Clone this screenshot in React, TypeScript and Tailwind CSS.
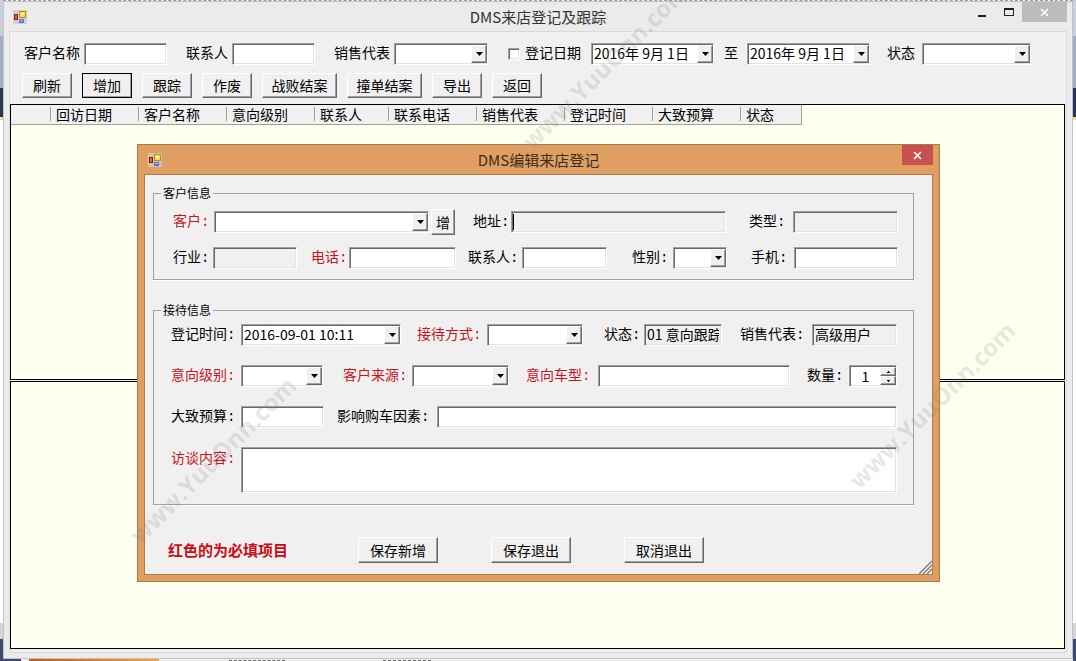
import React, { ReactNode, useState } from "react";
import clsx from "clsx";

const sunken =
  "border border-t-[#a0a0a0] border-l-[#a0a0a0] border-r-white border-b-white shadow-[inset_1px_1px_0_#696969,inset_-1px_-1px_0_#e3e3e3]";
const raised =
  "border border-t-white border-l-white border-r-[#696969] border-b-[#696969] bg-[#f0f0f0] shadow-[inset_-1px_-1px_0_#a0a0a0]";

const columns = [
  { title: "", width: "w-[40px]" },
  { title: "回访日期", width: "w-[88px]" },
  { title: "客户名称", width: "w-[88px]" },
  { title: "意向级别", width: "w-[88px]" },
  { title: "联系人", width: "w-[74px]" },
  { title: "联系电话", width: "w-[88px]" },
  { title: "销售代表", width: "w-[88px]" },
  { title: "登记时间", width: "w-[88px]" },
  { title: "大致预算", width: "w-[88px]" },
  { title: "状态", width: "w-[60px]" },
];

const toolbar = ["刷新", "增加", "跟踪", "作废", "战败结案", "撞单结案", "导出", "返回"];

function FormIcon() {
  return (
    <svg width="14" height="14" viewBox="0 0 14 14" aria-hidden="true">
      <rect width="14" height="14" fill="#cfc8c2" fillOpacity="0.8" />
      <rect x="1.5" y="4.5" width="3" height="5" fill="#d9604a" stroke="#8c1f14" />
      <rect x="6.5" y="1.5" width="6" height="6" fill="#f8d848" stroke="#b8901c" />
      <rect x="8" y="3" width="3" height="2" fill="#fdf2a8" />
      <rect x="6" y="9" width="5" height="4" fill="#4c7ce0" />
      <rect x="7" y="10" width="3" height="1" fill="#9cbcf8" />
    </svg>
  );
}

function CloseIcon() {
  return (
    <svg width="9" height="9" viewBox="0 0 9 9" aria-hidden="true">
      <path d="M1 1l7 7M8 1l-7 7" stroke="#fff" strokeWidth="1.6" fill="none" />
    </svg>
  );
}

function Arrow() {
  return (
    <svg width="7" height="4" viewBox="0 0 7 4" aria-hidden="true">
      <path d="M0 0h7L3.5 4z" fill="#000" />
    </svg>
  );
}

type FieldProps = {
  id: string;
  label: string;
  labelWidth?: string;
  required?: boolean;
  className?: string;
  children: ReactNode;
};

function Field({ id, label, labelWidth, required, className, children }: FieldProps) {
  return (
    <div className={clsx("flex items-center", className)}>
      <label
        htmlFor={id}
        className={clsx("shrink-0 whitespace-nowrap", labelWidth, required && "text-[#c8141e]")}
      >
        {label}
      </label>
      {children}
    </div>
  );
}

type InputProps = {
  id: string;
  width: string;
  value?: string;
  readOnly?: boolean;
};

function TextInput({ id, width, value = "", readOnly }: InputProps) {
  return (
    <input
      id={id}
      type="text"
      defaultValue={value}
      readOnly={readOnly}
      className={clsx(
        "h-[22px] min-w-0 px-[2px] pb-[2px] leading-[18px] outline-none",
        sunken,
        readOnly ? "bg-[#f0f0f0]" : "bg-white",
        width
      )}
    />
  );
}

function Select({ id, width }: { id: string; width: string }) {
  return (
    <div className={clsx("relative h-[22px] min-w-0 bg-white", sunken, width)}>
      <select id={id} className="h-full w-full appearance-none bg-transparent pr-4 pl-1 outline-none">
        <option></option>
      </select>
      <span
        className={clsx(
          "pointer-events-none absolute top-px right-0 bottom-px flex w-4 items-center justify-center",
          raised
        )}
      >
        <Arrow />
      </span>
    </div>
  );
}

function DateInput({ id, width, value }: { id: string; width: string; value: string }) {
  return (
    <div className={clsx("flex h-[22px] min-w-0 bg-white py-px pl-px", sunken, width)}>
      <input
        id={id}
        type="text"
        defaultValue={value}
        className="min-w-0 flex-1 bg-transparent pb-[2px] pl-px leading-4 outline-none"
      />
      <button
        type="button"
        aria-label="选择日期"
        className={clsx("flex w-4 shrink-0 items-center justify-center", raised)}
      >
        <Arrow />
      </button>
    </div>
  );
}

function NumberInput({ id, width }: { id: string; width: string }) {
  const [count, setCount] = useState<number>(1);

  return (
    <div className={clsx("flex h-[22px] bg-white py-px pl-px", sunken, width)}>
      <input
        id={id}
        type="text"
        inputMode="numeric"
        value={count}
        onChange={(e) => setCount(Number(e.target.value) || 0)}
        className="min-w-0 flex-1 bg-transparent text-center leading-[18px] outline-none"
      />
      <div className="flex w-4 shrink-0 flex-col">
        <button
          type="button"
          aria-label="增加数量"
          onClick={() => setCount(count + 1)}
          className={clsx("flex flex-1 items-center justify-center", raised)}
        >
          <svg width="3" height="2" viewBox="0 0 3 2" aria-hidden="true">
            <path d="M1 0h1v1h1v1H0V1h1z" />
          </svg>
        </button>
        <button
          type="button"
          aria-label="减少数量"
          onClick={() => setCount(count - 1)}
          className={clsx("flex flex-1 items-center justify-center", raised)}
        >
          <svg width="3" height="2" viewBox="0 0 3 2" aria-hidden="true">
            <path d="M0 0h3v1H2v1H1V1H0z" />
          </svg>
        </button>
      </div>
    </div>
  );
}

function Group({ title, className, children }: { title: string; className: string; children: ReactNode }) {
  return (
    <fieldset className="min-w-0 border border-[#a0a0a0] shadow-[0_1px_0_#fff]">
      <legend className="ml-[7px] px-[2px] text-xs leading-4">{title}</legend>
      <div className={clsx("flex flex-col", className)}>{children}</div>
    </fieldset>
  );
}

function EditDialog() {
  return (
    <div
      role="dialog"
      aria-label="DMS编辑来店登记"
      className="absolute top-[144px] right-[136px] left-[137px] border border-[#a87c48] bg-[#e09f62] px-[6px] pb-[6px]"
    >
      <div className="grid h-[29px] grid-cols-[1fr_auto_1fr] items-center">
        <span className="pl-1">
          <FormIcon />
        </span>
        <h2 className="text-[15px] text-[#3c2c1c]">DMS编辑来店登记</h2>
        <button
          type="button"
          aria-label="关闭"
          className="flex h-5 w-[31px] items-center justify-center self-start justify-self-end bg-[#c75050]"
        >
          <CloseIcon />
        </button>
      </div>

      <form className="relative flex flex-col border border-[#b07c48] bg-[#f0f0f0] pt-[10px]">
        <div className="flex flex-col gap-[22px] pr-[18px] pl-2">
          <Group title="客户信息" className="gap-3 pt-2 pr-[15px] pb-[10px] pl-[19px]">
            <div className="flex h-[26px] items-center">
              <Field id="customer" label="客户:" labelWidth="w-[41px]" required>
                <Select id="customer" width="w-[215px]" />
              </Field>
              <button type="button" className={clsx("ml-[2px] h-[26px] w-6 shrink-0", raised)}>
                增
              </button>
              <Field id="address" label="地址:" labelWidth="w-[38px]" className="ml-[18px] min-w-0 flex-1">
                <div className="relative flex min-w-0 flex-1">
                  <TextInput id="address" width="flex-1" readOnly />
                  <span className="absolute top-[3px] left-[2px] h-4 w-px bg-black" />
                </div>
              </Field>
              <Field id="kind" label="类型:" labelWidth="w-11" className="ml-[23px]">
                <TextInput id="kind" width="w-[105px]" readOnly />
              </Field>
            </div>
            <div className="flex items-center">
              <Field id="industry" label="行业:" labelWidth="w-10">
                <TextInput id="industry" width="w-[84px]" readOnly />
              </Field>
              <Field id="phone" label="电话:" labelWidth="w-[38px]" required className="ml-[14px] min-w-0 flex-1">
                <TextInput id="phone" width="flex-1" />
              </Field>
              <Field id="contact" label="联系人:" labelWidth="w-[54px]" className="ml-3">
                <TextInput id="contact" width="w-[85px]" />
              </Field>
              <Field id="gender" label="性别:" labelWidth="w-[41px]" className="ml-[25px]">
                <Select id="gender" width="w-[54px]" />
              </Field>
              <Field id="mobile" label="手机:" labelWidth="w-[43px]" className="ml-6">
                <TextInput id="mobile" width="w-[104px]" />
              </Field>
            </div>
          </Group>

          <Group title="接待信息" className="gap-[19px] pt-[6px] pr-4 pb-[11px] pl-[17px]">
            <div className="flex items-center">
              <Field id="time" label="登记时间:" labelWidth="w-[70px]" className="min-w-0 flex-1">
                <DateInput id="time" width="flex-1" value="2016-09-01 10:11" />
              </Field>
              <Field id="way" label="接待方式:" labelWidth="w-[70px]" required className="ml-4">
                <Select id="way" width="w-[96px]" />
              </Field>
              <Field id="state" label="状态:" labelWidth="w-10" className="ml-[21px]">
                <TextInput id="state" width="w-[78px]" value="01 意向跟踪" readOnly />
              </Field>
              <Field id="seller" label="销售代表:" labelWidth="w-[72px]" className="ml-[18px]">
                <TextInput id="seller" width="w-[85px]" value="高级用户" readOnly />
              </Field>
            </div>
            <div className="flex items-center">
              <Field id="level" label="意向级别:" labelWidth="w-[70px]" required>
                <Select id="level" width="w-[82px]" />
              </Field>
              <Field id="source" label="客户来源:" labelWidth="w-[69px]" required className="ml-5">
                <Select id="source" width="w-[97px]" />
              </Field>
              <Field id="model" label="意向车型:" labelWidth="w-[72px]" required className="ml-[17px] min-w-0 flex-1">
                <TextInput id="model" width="flex-1" />
              </Field>
              <Field id="count" label="数量:" labelWidth="w-[42px]" className="ml-[17px]">
                <NumberInput id="count" width="w-[48px]" />
              </Field>
            </div>
            <div className="flex items-center">
              <Field id="budget" label="大致预算:" labelWidth="w-[70px]">
                <TextInput id="budget" width="w-[83px]" />
              </Field>
              <Field id="factor" label="影响购车因素:" labelWidth="w-[100px]" className="ml-[13px] min-w-0 flex-1">
                <TextInput id="factor" width="flex-1" />
              </Field>
            </div>
            <div className="flex items-start">
              <label htmlFor="content" className="w-[70px] shrink-0 leading-6 text-[#c8141e]">
                访谈内容:
              </label>
              <textarea
                id="content"
                className={clsx("h-[46px] min-w-0 flex-1 resize-none bg-white px-[2px] outline-none", sunken)}
              />
            </div>
          </Group>
        </div>

        <div className="flex items-center pt-8 pb-[11px] pl-[23px]">
          <strong className="mr-[70px] text-[15px] text-[#cc0a14]">红色的为必填项目</strong>
          <div className="flex gap-[53px]">
            {["保存新增", "保存退出", "取消退出"].map((text) => (
              <button key={text} type="button" className={clsx("h-[26px] w-20", raised)}>
                {text}
              </button>
            ))}
          </div>
        </div>
        <svg className="absolute right-0 bottom-0" width="13" height="13" viewBox="0 0 13 13" aria-hidden="true">
          <path d="M0 13L13 0M4 13l9-9M8 13l5-5" stroke="#808080" strokeWidth="1.5" />
          <path d="M2 13L13 2M6 13l7-7M10 13l3-3" stroke="#fff" />
        </svg>
      </form>
    </div>
  );
}

function Watermark({ place }: { place: string }) {
  return (
    <span
      className={clsx(
        "pointer-events-none absolute flex h-6 w-[240px] -rotate-45 items-center justify-center font-['Open_Sans','Noto_Sans',sans-serif] text-2xl font-bold whitespace-nowrap text-[#808080]/20",
        place
      )}
    >
      www.YuuOnn.com
    </span>
  );
}

// slivers of the desktop that stay visible beside the window
function Edge() {
  return (
    <div className="flex w-[3px] shrink-0 flex-col">
      <div className="h-9 bg-[#c9cede]" />
      <div className="h-[52px] bg-[#a3aec2]" />
      <div className="h-[29px] bg-[#2c3452]" />
      <div className="h-[3px] bg-[#f3dd8c]" />
      <div className="flex-1 bg-white" />
      <div className="h-4 bg-[#d4d4d4]" />
      <div className="h-[22px] bg-[#3a4a70]" />
    </div>
  );
}

export default function App() {
  return (
    <div className="relative flex min-h-screen overflow-hidden bg-white font-['Noto_Sans_CJK_SC',sans-serif] text-sm leading-5 text-black [&_label]:font-['Liberation_Mono','Noto_Sans_CJK_SC',monospace]">
      <Edge />
      <div className="flex min-w-0 flex-1 flex-col">
        <div className="h-px border-t border-dashed border-[#9a9aa0]" />
        <main className="flex flex-1 flex-col border border-[#c4c4c8] bg-[#ebebeb] px-[5px] pb-[5px]">
          <header className="grid h-[29px] grid-cols-[1fr_auto_1fr] items-center">
            <span className="pl-1">
              <FormIcon />
            </span>
            <h1 className="text-[15px] text-[#333]">DMS来店登记及跟踪</h1>
            <div className="flex items-center justify-end self-start">
              <button type="button" aria-label="最小化" className="flex h-5 w-7 items-center justify-center">
                <span className="mt-2 h-[2px] w-2 bg-[#222]" />
              </button>
              <button type="button" aria-label="最大化" className="flex h-5 w-[26px] items-center justify-center">
                <span className="h-2 w-[10px] border border-t-2 border-[#222]" />
              </button>
              <button
                type="button"
                aria-label="关闭"
                className="flex h-5 w-[45px] items-center justify-center bg-[#bcbcbc]"
              >
                <CloseIcon />
              </button>
            </div>
          </header>

          <div className="flex flex-1 flex-col border border-[#dadada] bg-[#f0f0f0] pt-[11px] pb-[3px]">
            <form className="flex items-center pl-[14px]">
              <Field id="q-name" label="客户名称" labelWidth="w-[60px]">
                <TextInput id="q-name" width="w-[83px]" />
              </Field>
              <Field id="q-contact" label="联系人" labelWidth="w-[46px]" className="ml-[19px]">
                <TextInput id="q-contact" width="w-[83px]" />
              </Field>
              <Field id="q-seller" label="销售代表" labelWidth="w-[60px]" className="ml-[19px]">
                <Select id="q-seller" width="w-[94px]" />
              </Field>
              <div className="ml-5 flex items-center gap-[5px]">
                <input id="q-dated" type="checkbox" className={clsx("size-3 appearance-none bg-white", sunken)} />
                <label htmlFor="q-dated">登记日期</label>
              </div>
              <div className="ml-[10px] flex" role="group" aria-labelledby="q-dated">
                <DateInput id="q-from" width="w-[123px]" value="2016年 9月 1日" />
              </div>
              <Field id="q-to" label="至" labelWidth="w-[23px]" className="ml-[10px]">
                <DateInput id="q-to" width="w-[123px]" value="2016年 9月 1日" />
              </Field>
              <Field id="q-state" label="状态" labelWidth="w-[35px]" className="ml-[17px]">
                <Select id="q-state" width="w-[109px]" />
              </Field>
            </form>

            <div className="flex gap-[10px] pt-2 pb-[6px] pl-3">
              {toolbar.map((text) => (
                <button
                  key={text}
                  type="button"
                  className={clsx(
                    "h-[25px] pb-[2px]",
                    raised,
                    text.length > 2 ? "w-[75px]" : "w-[50px]",
                    text === "增加" && "outline outline-1 -outline-offset-1 outline-black"
                  )}
                >
                  {text}
                </button>
              ))}
            </div>

            <div className="flex flex-1 flex-col gap-px">
              <section className="mr-px flex-1 border border-black bg-[#fffff0]">
                <table className="w-[790px] table-fixed border-collapse">
                  <thead>
                    <tr className="h-[19px] border-b border-[#a0a0a0] bg-[#f0f0f0]">
                      {columns.map((col, i) => (
                        <th
                          key={col.title}
                          className={clsx(
                            "p-0 text-left font-normal",
                            col.width,
                            i === columns.length - 1 && "border-r border-[#a0a0a0]"
                          )}
                        >
                          <div
                            className={clsx(
                              "h-[14px] pl-[5px] leading-[14px] whitespace-nowrap",
                              i < columns.length - 1 && "border-r border-[#a0a0a0]"
                            )}
                          >
                            {col.title}
                          </div>
                        </th>
                      ))}
                    </tr>
                  </thead>
                </table>
              </section>
              <section className="mr-px h-[268px] border border-black bg-[#fffff0]" />
            </div>
          </div>
        </main>
        <div className="flex h-[2px] items-stretch bg-[#eeeeea]">
          <div className="w-[18px] bg-[#3a4a70]" />
          <div className="ml-2 w-[130px] bg-linear-to-r from-[#c05a20] to-[#f0a840]" />
          <div className="ml-[70px] w-14 border-b border-dashed border-[#666]" />
          <div className="ml-[98px] w-12 border-b border-dashed border-[#666]" />
        </div>
      </div>
      <Edge />

      <EditDialog />
      <Watermark place="top-[448px] left-[93px]" />
      <Watermark place="top-[54px] left-[485px]" />
      <Watermark place="top-[393px] left-[812px]" />
    </div>
  );
}
